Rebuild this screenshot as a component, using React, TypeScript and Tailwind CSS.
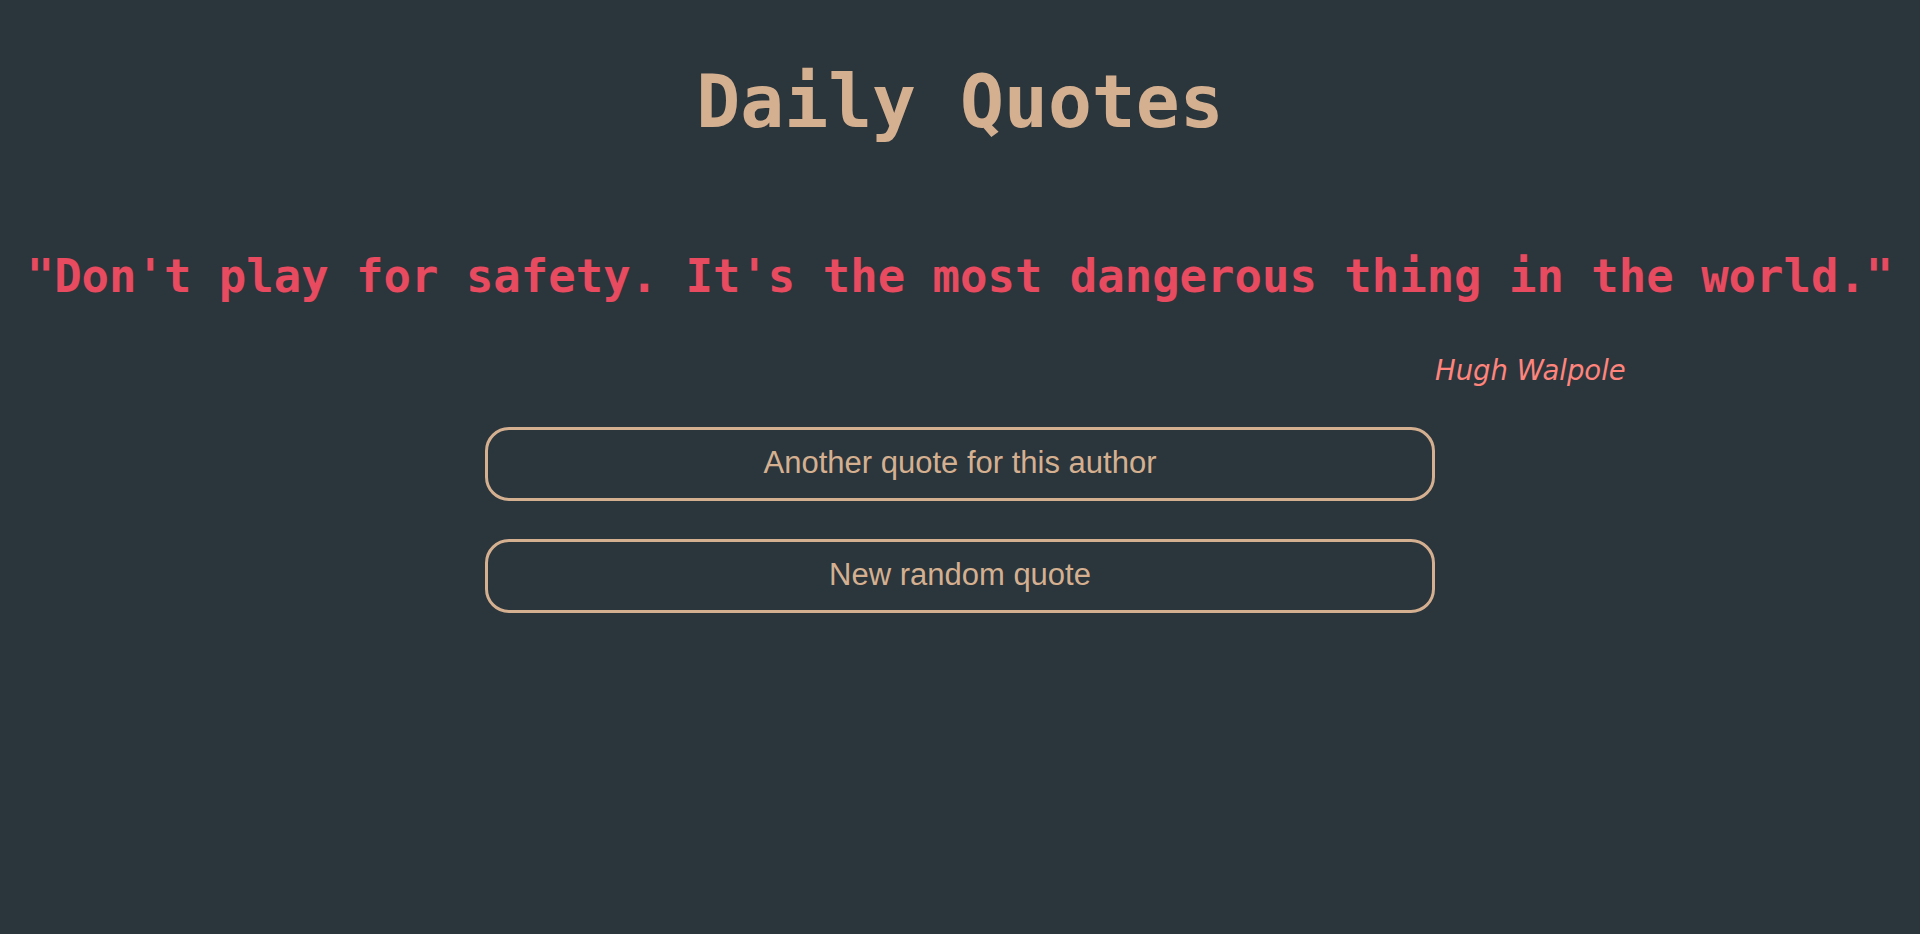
import { useState } from 'react'

const quotes = [
	{ text: "Don't play for safety. It's the most dangerous thing in the world.", author: 'Hugh Walpole' },
]

export default function App() {
	const [quote] = useState(quotes[0])

	return (
		<div className="min-h-[934px] w-full bg-[#2b353c] flex flex-col items-center">
			{/* title */}
			<h1 className="mt-[65px] text-[73px] leading-none font-bold text-[#d4b090] font-['DejaVu_Sans_Mono',monospace]">
				Daily Quotes
			</h1>

			{/* quote */}
			<p className="mt-[116px] text-[45.6px] leading-none font-bold text-[#e84a5f] whitespace-nowrap font-['DejaVu_Sans_Mono',monospace]">
				"{quote.text}"
			</p>

			{/* author */}
			<div className="w-full mt-[57px] pl-[calc(50%+475px)]">
				<span className="text-[27.5px] leading-none italic text-[#ff847c] font-['Comic_Sans_MS','DejaVu_Sans',sans-serif]">
					{quote.author}
				</span>
			</div>

			{/* buttons */}
			<div className="w-[950px] mt-[41px] flex flex-col gap-[38px]">
				<button className="h-[74px] w-full rounded-[24px] border-[3px] border-[#d4b090] bg-transparent text-[31px] text-[#d4b090] font-['Liberation_Sans',Arial,sans-serif]">
					Another quote for this author
				</button>
				<button className="h-[74px] w-full rounded-[24px] border-[3px] border-[#d4b090] bg-transparent text-[31px] text-[#d4b090] font-['Liberation_Sans',Arial,sans-serif]">
					New random quote
				</button>
			</div>
		</div>
	)
}
